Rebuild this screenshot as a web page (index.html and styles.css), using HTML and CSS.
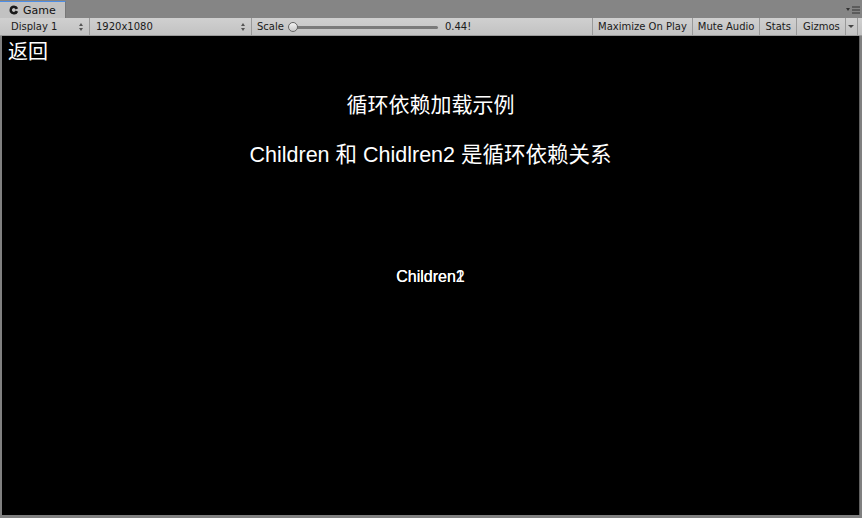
FILE: index.html
```html
<!DOCTYPE html>
<html>
<head>
<meta charset="utf-8">
<link rel="stylesheet" href="styles.css">
</head>
<body>
<div class="window">
  <div class="tabbar">
    <div class="tab">
      <svg class="tabicon" width="10" height="10" viewBox="0 0 10 10"><path d="M5 0.5a4.5 4.5 0 1 0 4.2 6.2L6.6 5.6a1.9 1.9 0 1 1 0-1.2l2.6-1.1A4.5 4.5 0 0 0 5 0.5z" fill="#1a1a1a"/></svg>
      <span>Game</span>
    </div>
    <div class="menu">
      <svg width="14" height="8" viewBox="0 0 14 8"><path d="M0 2h4l-2 3z" fill="#333"/><path d="M6 1h8M6 4h8M6 7h8" stroke="#333" stroke-width="1"/></svg>
    </div>
  </div>
  <div class="toolbar">
    <div class="tb drop display">Display 1<span class="arrows"></span></div>
    <div class="tb drop res">1920x1080<span class="arrows"></span></div>
    <div class="tb scale">
      <span>Scale</span>
      <div class="slider"><div class="track"></div><div class="knob"></div></div>
      <span class="val">0.44!</span>
    </div>
    <div class="tb btn">Maximize On Play</div>
    <div class="tb btn">Mute Audio</div>
    <div class="tb btn">Stats</div>
    <div class="tb btn gizmos">Gizmos</div>
    <div class="tb gizarrow"><span class="tri"></span></div>
  </div>
  <div class="game">
    <div class="back">返回</div>
    <div class="title">循环依赖加载示例</div>
    <div class="subtitle">Children 和 Chidlren2 是循环依赖关系</div>
    <div class="labels">
      <span class="label">Children1</span>
      <span class="label overlay">Children2</span>
    </div>
  </div>
</div>
</body>
</html>
```
FILE: styles.css
```css
* { box-sizing: border-box; }
html, body { margin: 0; padding: 0; }
body {
  width: 862px;
  height: 518px;
  overflow: hidden;
  background: #808080;
  font-family: "DejaVu Sans", sans-serif;
}
.window {
  width: 862px;
  height: 518px;
  display: flex;
  flex-direction: column;
}
.tabbar {
  height: 18px;
  display: flex;
  align-items: flex-end;
  background: #858585;
  position: relative;
}
.tab {
  width: 66px;
  height: 17px;
  background: #c2c2c2;
  border-top: 1px solid #4d8ee6;
  border-right: 1px solid #777;
  display: flex;
  align-items: center;
  gap: 4px;
  padding-left: 9px;
  font-size: 11px;
  color: #111;
}
.tabicon { display: block; }
.menu {
  position: absolute;
  right: 2px;
  top: 6px;
}
.menu svg { display: block; }
.toolbar {
  height: 18px;
  display: flex;
  background: linear-gradient(#d0d0d0, #c2c2c2);
  border-bottom: 1px solid #9a9a9a;
  font-size: 10px;
  color: #1a1a1a;
  padding-left: 4px;
}
.tb {
  display: flex;
  align-items: center;
  border-right: 1px solid #999;
  height: 100%;
  white-space: nowrap;
}
.drop { position: relative; padding-left: 7px; }
.display { width: 86px; }
.res { width: 162px; padding-left: 6px; }
.arrows {
  position: absolute;
  right: 5px;
  top: 5px;
  width: 5px;
  height: 8px;
}
.arrows::before, .arrows::after {
  content: "";
  position: absolute;
  left: 0;
  border-left: 2.5px solid transparent;
  border-right: 2.5px solid transparent;
}
.arrows::before { top: 0; border-bottom: 3px solid #555; }
.arrows::after { bottom: 0; border-top: 3px solid #555; }
.scale {
  width: 341px;
  padding-left: 5px;
}
.slider {
  position: relative;
  width: 150px;
  height: 12px;
  margin-left: 4px;
  margin-right: 7px;
}
.track {
  position: absolute;
  left: 4px; right: 0;
  top: 5px;
  height: 3px;
  background: #7a7a7a;
  border-radius: 2px;
}
.knob {
  position: absolute;
  left: 0; top: 1px;
  width: 10px; height: 10px;
  border-radius: 50%;
  background: linear-gradient(#f2f2f2, #c8c8c8);
  border: 1px solid #666;
}
.btn { padding: 0 5px; }
.gizmos { padding: 0 5px 0 6px; }
.gizarrow { width: 12px; justify-content: center; border-right: 1px solid #999; }
.tri {
  border-left: 3px solid transparent;
  border-right: 3px solid transparent;
  border-top: 3px solid #444;
}
.game {
  flex: 1;
  margin: 0 2px 3px 2px;
  background: #000;
  color: #fff;
  font-family: "Liberation Sans", "Noto Sans CJK SC", sans-serif;
  display: flex;
  flex-direction: column;
  align-items: center;
  position: relative;
  border-right: 1px solid #606060;
}
.back {
  align-self: flex-start;
  font-size: 20px;
  line-height: 24px;
  margin-top: 4px;
  margin-left: 6px;
}
.title {
  font-size: 21px;
  line-height: 24px;
  margin-top: 29px;
}
.subtitle {
  font-size: 21.5px;
  line-height: 26px;
  margin-top: 25px;
}
.labels {
  position: relative;
  margin-top: 100px;
  font-size: 16px;
  line-height: 18px;
}
.overlay {
  position: absolute;
  left: 0;
  top: 0;
}
```
